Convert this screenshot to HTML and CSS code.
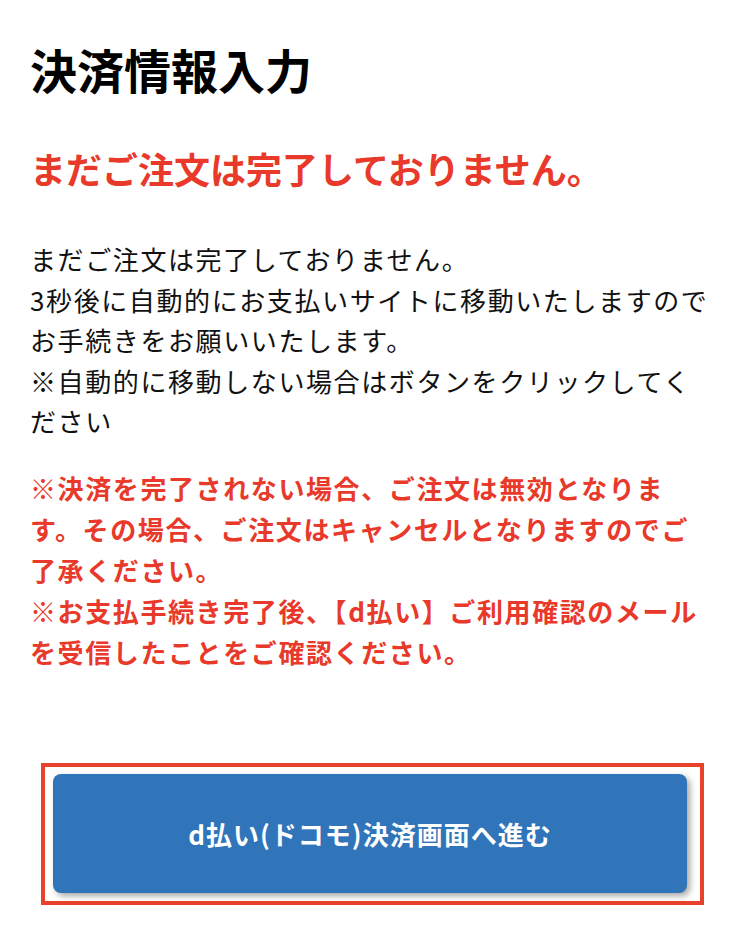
FILE: index.html
```html
<!DOCTYPE html>
<html lang="ja">
<head>
<meta charset="utf-8">
<title>決済情報入力</title>
<link rel="stylesheet" href="styles.css">
</head>
<body>
<main class="page">
  <h1 class="title">決済情報入力</h1>
  <h2 class="alert">まだご注文は完了しておりません。</h2>
  <p class="message">まだご注文は完了しておりません。<br>3秒後に自動的にお支払いサイトに移動いたしますのでお手続きをお願いいたします。<br>※自動的に移動しない場合はボタンをクリックしてください</p>
  <p class="notice">※決済を完了されない場合、ご注文は無効となります。その場合、ご注文はキャンセルとなりますのでご了承ください。<br>※お支払手続き完了後、【d払い】ご利用確認のメールを受信したことをご確認ください。</p>
  <div class="frame">
    <button class="pay-button" type="button">d払い(ドコモ)決済画面へ進む</button>
  </div>
</main>
</body>
</html>
```

FILE: styles.css
```css
html, body {
  margin: 0;
  padding: 0;
  background: #ffffff;
}

body {
  font-family: "Noto Sans CJK JP", "Noto Sans", sans-serif;
  color: #111111;
}

.page {
  padding: 39px 30px 0 30px;
}

.title {
  margin: 0;
  font-size: 47px;
  line-height: 60px;
  font-weight: 700;
  color: #000000;
}

.alert {
  margin: 44px 0 0 0;
  font-size: 36px;
  line-height: 50px;
  font-weight: 700;
  color: #e8392a;
}

.message {
  margin: 46px 0 0 0;
  font-size: 26px;
  line-height: 40.6px;
  letter-spacing: 1.6px;
  font-weight: 400;
}

.notice {
  margin: 25px 0 0 0;
  font-size: 26px;
  line-height: 41px;
  letter-spacing: 1.6px;
  font-weight: 700;
  color: #e8392a;
}

.frame {
  margin: 91px 0 0 11px;
  width: 663px;
  height: 142px;
  box-sizing: border-box;
  border: 4px solid #e8412c;
  padding: 7px 13px 8px 8px;
  display: flex;
}

.pay-button {
  flex: 1;
  border: none;
  border-radius: 8px;
  background: #3074b9;
  color: #ffffff;
  font-family: "Noto Sans CJK JP", "Noto Sans", sans-serif;
  font-size: 26px;
  letter-spacing: 1px;
  font-weight: 700;
  box-shadow: 3px 3px 6px rgba(0, 0, 0, 0.35);
  cursor: pointer;
}
```
